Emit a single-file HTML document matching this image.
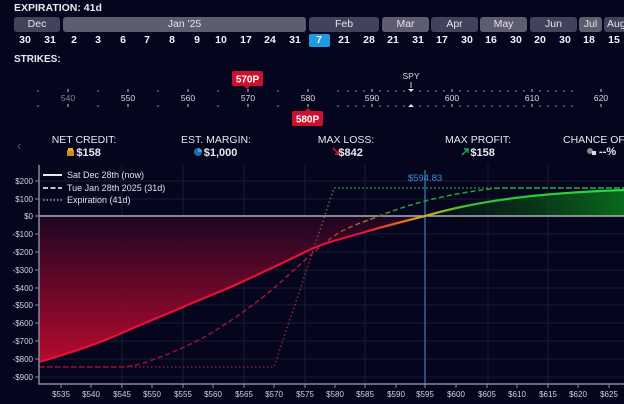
<!DOCTYPE html>
<html><head><meta charset="utf-8"><style>
*{margin:0;padding:0;box-sizing:border-box}
body{width:624px;height:404px;background:#05051e;overflow:hidden;font-family:"Liberation Sans",sans-serif;color:#e8e8ee;position:relative}
.a{position:absolute;white-space:nowrap}
.mb{position:absolute;top:17px;height:15px;border-radius:3px;font-size:10.5px;text-align:center;line-height:15px;color:#e4e4ea}
.l{background:#5e5d70}.d{background:#42425a}
.dt{position:absolute;top:34px;width:22px;margin-left:-11px;text-align:center;font-size:10.5px;font-weight:bold;line-height:13px;color:#f2f2f6}
.st{position:absolute;top:134px;text-align:center;font-size:10.5px;transform:translateX(-50%)}
.st b{display:block;font-size:11px;margin-top:1px}
</style></head><body>
<div class="a" style="left:14px;top:2px;font-size:10.5px;font-weight:bold">EXPIRATION: 41d</div>
<div class="mb d" style="left:14px;width:46px">Dec</div>
<div class="mb l" style="left:63px;width:243px">Jan '25</div>
<div class="mb d" style="left:309px;width:70px">Feb</div>
<div class="mb l" style="left:382px;width:47px">Mar</div>
<div class="mb d" style="left:431px;width:47px">Apr</div>
<div class="mb l" style="left:480px;width:47px">May</div>
<div class="mb d" style="left:530px;width:47px">Jun</div>
<div class="mb l" style="left:579px;width:23px">Jul</div>
<div class="mb d" style="left:604px;width:30px;text-align:left;padding-left:3px">Aug</div>
<div class="a" style="left:309px;top:34px;width:21px;height:13px;background:#1e9be0;border-radius:2px"></div>
<div class="dt" style="left:25px">30</div><div class="dt" style="left:50px">31</div><div class="dt" style="left:74px">2</div><div class="dt" style="left:98px">3</div><div class="dt" style="left:123px">6</div><div class="dt" style="left:147px">7</div><div class="dt" style="left:172px">8</div><div class="dt" style="left:197px">9</div><div class="dt" style="left:221px">10</div><div class="dt" style="left:246px">17</div><div class="dt" style="left:270px">24</div><div class="dt" style="left:295px">31</div><div class="dt" style="left:319px">7</div><div class="dt" style="left:344px">21</div><div class="dt" style="left:369px">28</div><div class="dt" style="left:393px">21</div><div class="dt" style="left:418px">31</div><div class="dt" style="left:442px">17</div><div class="dt" style="left:467px">30</div><div class="dt" style="left:491px">16</div><div class="dt" style="left:516px">30</div><div class="dt" style="left:540px">20</div><div class="dt" style="left:565px">30</div><div class="dt" style="left:589px">18</div><div class="dt" style="left:614px">15</div>
<div class="a" style="left:14px;top:54px;font-size:10px;font-weight:bold">STRIKES:</div>

<svg class="a" style="left:0;top:0" width="624" height="404">
<g stroke="#8a8aa0" stroke-width="1">
<path d="M38 90v2M38 105v2M98 90v2M98 105v2M158 90v2M158 105v2M218 90v2M218 105v2M278 90v2M278 105v2M338 90v2M338 105v2"/>
<path d="M348 90v2M348 105v2M356 90v2M356 105v2M364 90v2M364 105v2M380 90v2M380 105v2M388 90v2M388 105v2M396 90v2M396 105v2M404 90v2M404 105v2M420 90v2M420 105v2M428 90v2M428 105v2M436 90v2M436 105v2M444 90v2M444 105v2M460 90v2M460 105v2M468 90v2M468 105v2M476 90v2M476 105v2M484 90v2M484 105v2M492 90v2M492 105v2M500 90v2M500 105v2M508 90v2M508 105v2M516 90v2M516 105v2M524 90v2M524 105v2M540 90v2M540 105v2M548 90v2M548 105v2M556 90v2M556 105v2M564 90v2M564 105v2M572 90v2M572 105v2"/>
<path stroke="#c8c8d4" d="M68 89v3M68 104v3M128 89v3M128 104v3M188 89v3M188 104v3M248 89v3M248 104v3M308 89v3M308 104v3M372 89v3M372 104v3M452 89v3M452 104v3M532 89v3M532 104v3M601 89v3M601 104v3M411 82v6"/>
</g>
<g font-size="8.5" fill="#dcdce4" text-anchor="middle"><text x="68" y="101" fill="#8a8a9a">540</text><text x="128" y="101">550</text><text x="188" y="101">560</text><text x="248" y="101">570</text><text x="308" y="101">580</text><text x="372" y="101">590</text><text x="452" y="101">600</text><text x="532" y="101">610</text><text x="601" y="101">620</text>
<text x="411" y="79" font-size="8.5">SPY</text></g>
<path d="M408 89h6l-3 3z M408 107h6l-3-3z" fill="#e0e0e8"/>
<rect x="232" y="71" width="31" height="15" rx="2" fill="#cc1030"/><path d="M244 86h6l-3 3z" fill="#cc1030"/>
<rect x="292" y="111" width="31" height="15" rx="2" fill="#cc1030"/><path d="M305 111h6l-3-3z" fill="#cc1030"/>
<g font-size="10" font-weight="bold" fill="#fff" text-anchor="middle"><text x="247.5" y="82.5">570P</text><text x="307.5" y="122.5">580P</text></g>
<text x="17" y="150" font-size="13" fill="#555568">‹</text>

<defs>
<linearGradient id="rf" x1="0" y1="0" x2="0" y2="1"><stop offset="0" stop-color="#1e0522"/><stop offset="1" stop-color="#c00a2e"/></linearGradient>
<linearGradient id="gf" x1="425" y1="0" x2="624" y2="0" gradientUnits="userSpaceOnUse"><stop offset="0" stop-color="#0a3010" stop-opacity=".2"/><stop offset="1" stop-color="#0a6a1a"/></linearGradient>
<linearGradient id="sl" x1="39" y1="0" x2="624" y2="0" gradientUnits="userSpaceOnUse"><stop offset="0" stop-color="#e8103a"/><stop offset=".55" stop-color="#e8103a"/><stop offset=".63" stop-color="#e07818"/><stop offset=".66" stop-color="#d0b020"/><stop offset=".74" stop-color="#30c030"/><stop offset="1" stop-color="#20e040"/></linearGradient>
<linearGradient id="dl" x1="39" y1="0" x2="624" y2="0" gradientUnits="userSpaceOnUse"><stop offset="0" stop-color="#8a1030"/><stop offset=".47" stop-color="#a01836"/><stop offset=".56" stop-color="#b07028"/><stop offset=".62" stop-color="#2a9a38"/><stop offset="1" stop-color="#28b040"/></linearGradient>
<linearGradient id="pl" x1="270" y1="0" x2="340" y2="0" gradientUnits="userSpaceOnUse"><stop offset="0" stop-color="#901840"/><stop offset=".6" stop-color="#903040"/><stop offset="1" stop-color="#30a040"/></linearGradient>
</defs>
<g stroke="#1a1a34" stroke-width="1">
<path d="M39 181H624M39 199H624M39 234H624M39 252H624M39 270H624M39 288H624M39 305H624M39 323H624M39 341H624M39 359H624M39 377H624"/>
<path d="M122 165V384M183 165V384M244 165V384M305 165V384M365 165V384M488 165V384M548 165V384"/>
</g>
<path d="M39 216L39 362C60 356 95 345 122 333S160 317 183 307S225 290 244 281S285 262 305 252S345 238 365 232S405 221 425 216Z" fill="url(#rf)" opacity=".95"/>
<path d="M425 216C480 200 540 193 624 190L624 216Z" fill="url(#gf)"/>
<path d="M39 216H624" stroke="#b0b0b8" stroke-width="1.5"/>
<path d="M425 170V384" stroke="#2a6a9c" stroke-width="1.5"/>
<text x="425" y="181" font-size="9.5" fill="#3a90d4" text-anchor="middle">$594.83</text>
<path d="M39 367H274L334 188H624" fill="none" stroke="url(#pl)" stroke-width="1.5" stroke-dasharray="1.5 2.5"/>
<path d="M39 367H122C135 366 145 363 152 360C180 350 200 340 213 332C240 315 260 300 274 288C300 265 320 245 340 232C360 222 370 220 379 216C420 200 460 192 499 188H624" fill="none" stroke="url(#dl)" stroke-width="1.5" stroke-dasharray="5 3"/>
<path d="M39 362C60 356 95 345 122 333S160 317 183 307S225 290 244 281S285 262 305 252S345 238 365 232S405 221 425 216C480 200 540 193 624 190" fill="none" stroke="url(#sl)" stroke-width="2.2"/>
<path d="M39 165V384H624" fill="none" stroke="#8a8a98" stroke-width="1.5"/>
<g stroke="#8a8a98"><path d="M35 181h4M35 199h4M35 216h4M35 234h4M35 252h4M35 270h4M35 288h4M35 305h4M35 323h4M35 341h4M35 359h4M35 377h4"/>
<path d="M61 384v4M91 384v4M122 384v4M152 384v4M183 384v4M213 384v4M244 384v4M274 384v4M305 384v4M335 384v4M365 384v4M396 384v4M425 384v4M456 384v4M487 384v4M517 384v4M548 384v4M578 384v4M609 384v4"/></g>
<g font-size="8" fill="#d0d0dc" text-anchor="end"><text x="33" y="184">$200</text><text x="33" y="202">$100</text><text x="33" y="219">$0</text><text x="33" y="237">-$100</text><text x="33" y="255">-$200</text><text x="33" y="273">-$300</text><text x="33" y="291">-$400</text><text x="33" y="308">-$500</text><text x="33" y="326">-$600</text><text x="33" y="344">-$700</text><text x="33" y="362">-$800</text><text x="33" y="380">-$900</text></g>
<g font-size="8" fill="#d0d0dc" text-anchor="middle"><text x="61" y="397">$535</text><text x="91" y="397">$540</text><text x="122" y="397">$545</text><text x="152" y="397">$550</text><text x="183" y="397">$555</text><text x="213" y="397">$560</text><text x="244" y="397">$565</text><text x="274" y="397">$570</text><text x="305" y="397">$575</text><text x="335" y="397">$580</text><text x="365" y="397">$585</text><text x="396" y="397">$590</text><text x="425" y="397">$595</text><text x="456" y="397">$600</text><text x="487" y="397">$605</text><text x="517" y="397">$610</text><text x="548" y="397">$615</text><text x="578" y="397">$620</text><text x="609" y="397">$625</text></g>
<g stroke="#e8e8ee" stroke-width="2"><path d="M43 175h19"/><path d="M43 188h19" stroke-dasharray="5 2.5" stroke="#c0c0c8"/><path d="M43 200h19" stroke-dasharray="1.5 2" stroke="#a0a0a8" stroke-width="1.5"/></g>
<g font-size="9" fill="#e0e0e8"><text x="67" y="178">Sat Dec 28th (now)</text><text x="67" y="191">Tue Jan 28th 2025 (31d)</text><text x="67" y="203">Expiration (41d)</text></g>
<rect x="67" y="150" width="7" height="6" fill="#c89018"/><rect x="68" y="148" width="5" height="3" fill="#e0b030"/>
<circle cx="198" cy="152" r="4" fill="#1e6ea8"/><path d="M198 152V148A4 4 0 0 1 202 152Z" fill="#3aa0e0"/>
<path d="M333 148l6 6M339 150v4h-4" stroke="#e01838" stroke-width="1.4" fill="none"/>
<path d="M462 155l6-6M464 149h4v4" stroke="#20b050" stroke-width="1.4" fill="none"/>
<circle cx="590" cy="151" r="3" fill="#888"/><rect x="592" y="151" width="4" height="4" fill="#ddd"/>
</svg>
<div class="st" style="left:84px">NET CREDIT:<b>&nbsp;&nbsp;&nbsp;$158</b></div>
<div class="st" style="left:216px">EST. MARGIN:<b>&nbsp;&nbsp;&nbsp;$1,000</b></div>
<div class="st" style="left:346px">MAX LOSS:<b>&nbsp;&nbsp;&nbsp;$842</b></div>
<div class="st" style="left:478px">MAX PROFIT:<b>&nbsp;&nbsp;&nbsp;$158</b></div>
<div class="a" style="left:563px;top:134px;font-size:10.5px">CHANCE OF P</div>
<div class="a" style="left:599px;top:146px;font-size:11px;font-weight:bold">--%</div>
</body></html>
